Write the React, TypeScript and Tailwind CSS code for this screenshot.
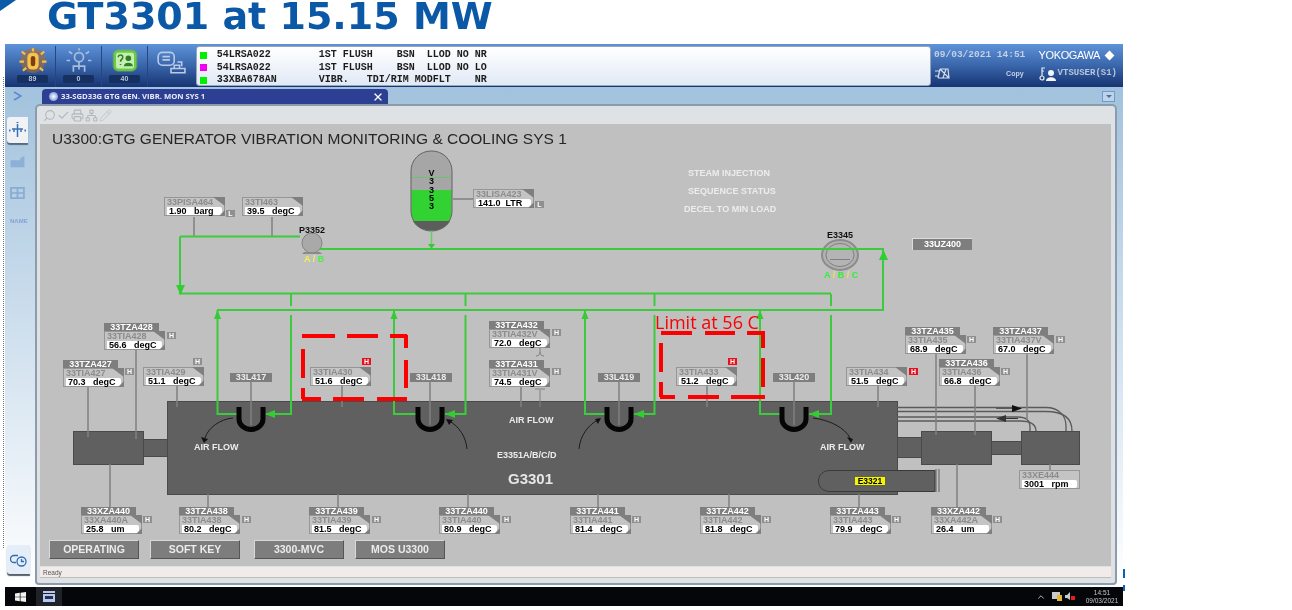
import { Check, Pencil, Printer, Search, Network, X, ChevronUp } from "lucide-react";

const ORIGIN_X = 40;
const ORIGIN_Y = 124;

interface TagData {
  x: number;
  y: number;
  head?: string;
  name: string;
  value: string;
  badge?: { x: number; y: number; text: string; red?: boolean };
  plain?: boolean;
}

const tags: TagData[] = [
  { x: 164, y: 197, name: "33PISA464", value: "1.90   barg", badge: { x: 226, y: 210, text: "L" } },
  { x: 242, y: 197, name: "33TI463", value: "39.5   degC" },
  { x: 473, y: 189, name: "33LISA423", value: "141.0  LTR", badge: { x: 535, y: 201, text: "L" } },
  { x: 104, y: 331, head: "33TZA428", name: "33TIA428", value: "56.6   degC", badge: { x: 167, y: 332, text: "H" } },
  { x: 63, y: 368, head: "33TZA427", name: "33TIA427", value: "70.3   degC", badge: { x: 125, y: 368, text: "H" } },
  { x: 143, y: 367, name: "33TIA429", value: "51.1   degC", badge: { x: 193, y: 358, text: "H" } },
  { x: 310, y: 367, name: "33TIA430", value: "51.6   degC", badge: { x: 362, y: 358, text: "H", red: true } },
  { x: 489, y: 329, head: "33TZA432", name: "33TIA432V", value: "72.0   degC", badge: { x: 552, y: 329, text: "H" } },
  { x: 489, y: 368, head: "33TZA431", name: "33TIA431V", value: "74.5   degC", badge: { x: 552, y: 368, text: "H" } },
  { x: 676, y: 367, name: "33TIA433", value: "51.2   degC", badge: { x: 728, y: 358, text: "H", red: true } },
  { x: 846, y: 367, name: "33TIA434", value: "51.5   degC", badge: { x: 909, y: 368, text: "H", red: true } },
  { x: 905, y: 335, head: "33TZA435", name: "33TIA435", value: "68.9   degC", badge: { x: 967, y: 336, text: "H" } },
  { x: 993, y: 335, head: "33TZA437", name: "33TIA437V", value: "67.0   degC", badge: { x: 1056, y: 336, text: "H" } },
  { x: 939, y: 367, head: "33TZA436", name: "33TIA436", value: "66.8   degC", badge: { x: 1001, y: 368, text: "H" } },
  { x: 1019, y: 470, name: "33XE444", value: "3001   rpm", plain: true },
  { x: 81, y: 515, head: "33XZA440", name: "33XA440A", value: "25.8   um", badge: { x: 143, y: 516, text: "H" } },
  { x: 179, y: 515, head: "33TZA438", name: "33TIA438", value: "80.2   degC", badge: { x: 242, y: 516, text: "H" } },
  { x: 309, y: 515, head: "33TZA439", name: "33TIA439", value: "81.5   degC", badge: { x: 372, y: 516, text: "H" } },
  { x: 439, y: 515, head: "33TZA440", name: "33TIA440", value: "80.9   degC", badge: { x: 502, y: 516, text: "H" } },
  { x: 570, y: 515, head: "33TZA441", name: "33TIA441", value: "81.4   degC", badge: { x: 632, y: 516, text: "H" } },
  { x: 700, y: 515, head: "33TZA442", name: "33TIA442", value: "81.8   degC", badge: { x: 762, y: 516, text: "H" } },
  { x: 830, y: 515, head: "33TZA443", name: "33TIA443", value: "79.9   degC", badge: { x: 892, y: 516, text: "H" } },
  { x: 931, y: 515, head: "33XZA442", name: "33XA442A", value: "26.4   um", badge: { x: 993, y: 516, text: "H" } },
];

const loops = [
  { x: 230, label: "33L417" },
  { x: 410, label: "33L418" },
  { x: 598, label: "33L419" },
  { x: 773, label: "33L420" },
];

const labels = [
  { x: 688, y: 173, text: "STEAM INJECTION" },
  { x: 688, y: 191, text: "SEQUENCE STATUS" },
  { x: 684, y: 209, text: "DECEL TO MIN LOAD" },
  { x: 194, y: 447, text: "AIR FLOW" },
  { x: 509, y: 420, text: "AIR FLOW" },
  { x: 820, y: 447, text: "AIR FLOW" },
  { x: 497, y: 455, text: "E3351A/B/C/D" },
];

const pipes = [
  "M180 236.5H300",
  "M320 249H883V310H217",
  "M180 236.5V293.5H831",
  "M291 294V306M465.5 294V306M654.5 294V306M831 294V306",
  "M291 315V414H266M465.5 315V414H445M654.5 315V414H634M831 315V414H809",
  "M217.5 310V414H238M394 310V414H417M585 310V414H606M760 310V414H781",
];

const leaders = [
  "M194 217V236M272 217V236M453 199H473",
  "M136 349V439M88 386V437M177 386V407M342 386V407",
  "M251 382V425M430 382V425M619 382V425M794 382V425",
  "M521 386V407M707 386V407M878 386V407",
  "M936 354V435M975 386V435M1027 354V420M1050 464V470",
  "M110 464V507M208 494V507M338 494V507M468 494V507M598 494V507M729 494V507M859 494V507M957 464V507",
];

// red markup boxes were hand drawn in the original, so the dashes are uneven
const markup =
  "M302 336H335M347 336H378M390 336H407M406 335V348M406 360V388M302 399H321M333 399H364M377 399H407M303 349V378M303 388V399" +
  "M661 333H692M705 333H735M747 333H765M763 333V348M763 358V387M660 397H675M688 397H719M731 397H765M661 343V372M661 382V397";

function Tag({ tag }: { tag: TagData }) {
  return (
    <>
      {tag.head && (
        <div
          className="absolute w-[55px] h-[9px] bg-[#7e7e7e] text-white text-[9px] font-bold leading-[9px] text-center"
          style={{ left: tag.x - ORIGIN_X, top: tag.y - 8 - ORIGIN_Y }}
        >
          {tag.head}
        </div>
      )}
      <div
        className="absolute w-[61px] h-[19px] border border-[#969696] bg-[#c4c4c4]"
        style={{ left: tag.x - ORIGIN_X, top: tag.y - ORIGIN_Y }}
      >
        <div className="pl-[2px] text-[9px] font-bold leading-[9px] text-[#8c8c8c] whitespace-pre">{tag.name}</div>
        <div className="mx-[2px] h-[8px] bg-white rounded-r-[2px] pl-[2px] text-[9px] font-bold leading-[8px] text-black whitespace-pre">
          {tag.value}
        </div>
        {!tag.plain && (
          <svg className="absolute right-[-1px] top-[-1px]" width="61" height="19" viewBox="0 0 61 19">
            <path d="M49 0H61V9Z M61 13V19H55Z" fill="#7f7f7f" />
          </svg>
        )}
      </div>
      {tag.badge && (
        <div
          className={`absolute w-[9px] h-[7px] text-[7px] font-bold leading-[7px] text-center text-white ${
            tag.badge.red ? "bg-[#e8101c]" : "bg-[#8f8f8f]"
          }`}
          style={{ left: tag.badge.x - ORIGIN_X, top: tag.badge.y - ORIGIN_Y }}
        >
          {tag.badge.text}
        </div>
      )}
    </>
  );
}

function Diagram() {
  return (
    <svg className="absolute inset-0" width="1071" height="442" viewBox="40 124 1071 442">
      {/* Vessel */}
      <rect x="411" y="151" width="41" height="80" rx="20" fill="#a6a6a6" />
      <path d="M411.5 190H451.5V212C451.5 224 442 230.5 431.5 230.5C421 230.5 411.5 224 411.5 212Z" fill="#32d232" />
      <path d="M413 221H450C447 227 440 230.5 431.5 230.5C423 230.5 416 227 413 221Z" fill="#5d5d5d" />
      <rect x="411" y="151" width="41" height="80" rx="20" fill="none" stroke="#636363" />
      <path d="M412 177.500H451" stroke="#5fc85f" strokeWidth="0.8" />
      <path d="M431.500 231V247" stroke="#5fd25f" strokeWidth="1.5" />
      <path d="M428 244H435L431.500 249Z" fill="#37c837" />

      {/* Machine train */}
      <g fill="#606060" stroke="#4a4a4a">
        <rect x="73.500" y="431.500" width="70" height="33" />
        <rect x="143.500" y="439.500" width="24" height="17" />
        <rect x="167.500" y="401.500" width="730" height="93" />
        <rect x="897.500" y="437.500" width="24" height="20" />
        <rect x="921.500" y="431.500" width="70" height="33" />
        <rect x="991.500" y="441.500" width="30" height="13" />
        <rect x="1021.500" y="431.500" width="58" height="33" />
        <path d="M935 470.500H830C823 470.500 818.500 475 818.500 481S823 491.500 830 491.500H935Z" stroke="#3a3a3a" />
      </g>
      <path d="M936 469V492M939 469V492" stroke="#5a5a5a" />

      {/* Bearing return lines */}
      <g fill="none" stroke="#5a5a5a" strokeWidth="1.300">
        <path d="M897 407.500H1046C1058 407.500 1066 415 1066 426V431" />
        <path d="M897 411.500H1046C1062 411.500 1072 417 1072 431" />
        <path d="M897 417H1018C1026 417 1030 421 1030 427V431" />
        <path d="M897 421H1020C1030 421 1036 424 1036 431" />
      </g>
      <path d="M996 408H1012V405L1022 408.500L1012 412V408.500H996Z" fill="#111" />
      <path d="M1018 418H1006V415L996 418.500L1006 422V419H1018Z" fill="#333" />

      {/* Leader lines */}
      <g stroke="#808080" strokeWidth="1.500" fill="none">
        {leaders.map((d) => (
          <path key={d} d={d} />
        ))}
        <path d="M540 347V352M536 356C539 356 540 354 540 352C540 354 541 356 544 356" strokeWidth="1" />
        <path d="M540 390V407M535 389H545" strokeWidth="1" />
      </g>

      {/* Pump and cooler */}
      <circle cx="312" cy="243" r="10" fill="#a9a9a9" stroke="#848484" />
      <path d="M304 252H320L322 254H302Z" fill="#8a8a8a" />
      <ellipse cx="840" cy="255" rx="18" ry="15" fill="#b0b0b0" stroke="#8c8c8c" strokeWidth="2" />
      <ellipse cx="840" cy="255" rx="14" ry="11.500" fill="#b4b4b4" stroke="#808080" />
      <path d="M830 259.500H850" stroke="#808080" />

      {/* Green process pipes */}
      <g stroke="#3ccb3c" strokeWidth="2" fill="none">
        {pipes.map((d) => (
          <path key={d} d={d} />
        ))}
      </g>
      <g fill="#33cc33">
        <path d="M176 285H185L180.500 295Z" />
        <path d="M879 260H888L883.500 250Z" />
        <path d="M214 319H221L217.500 310Z" />
        <path d="M390.500 319H397.500L394 310Z" />
        <path d="M581.500 319H588.500L585 310Z" />
        <path d="M756.500 319H763.500L760 310Z" />
        <path d="M275 410V418L265 414Z" />
        <path d="M455 410V418L445 414Z" />
        <path d="M644 410V418L634 414Z" />
        <path d="M819 410V418L809 414Z" />
      </g>

      {/* Cooling coils */}
      <g fill="none" stroke="#050505" strokeWidth="5">
        <path d="M239 407V419A12 10.500 0 0 0 263 419V407" />
        <path d="M418 407V419A12 10.500 0 0 0 442 419V407" />
        <path d="M607 407V419A12 10.500 0 0 0 631 419V407" />
        <path d="M782 407V419A12 10.500 0 0 0 806 419V407" />
      </g>

      {/* Air flow arrows */}
      <g fill="none" stroke="#1c1c1c">
        <path d="M233 418C220 419 208 428 205 438" />
        <path d="M467 449C466 437 459 426 449 421" />
        <path d="M579 449C580 436 588 425 598 420" />
        <path d="M813 418C830 420 845 428 850 438" />
      </g>
      <g fill="#111">
        <path d="M201 437L208 439L204 443Z" />
        <path d="M446 419L453 420L449 425Z" />
        <path d="M601 418L595 419L598 424Z" />
        <path d="M853 439L847 437L851 443Z" />
      </g>

      {/* Marked-up limit boxes */}
      <path d={markup} fill="none" stroke="#fb0000" strokeWidth="4" />
    </svg>
  );
}

function ProcessCanvas() {
  return (
    <div className="relative h-[442px] bg-[#c0c0c0] overflow-hidden">
      <Diagram />
      <div className="absolute left-[12px] top-[7px] text-[15.500px] leading-4 text-[#262626] whitespace-nowrap">
        U3300:GTG GENERATOR VIBRATION MONITORING &amp; COOLING SYS 1
      </div>

      <div className="absolute left-[387px] top-[45px] w-[9px] text-[9px] font-bold leading-[8.300px] text-center text-black">
        V 3 3 5 3
      </div>

      <div className="absolute left-[259px] top-[102px] text-[9px] font-bold leading-[8px] text-[#111]">P3352</div>
      <div className="absolute left-[264px] top-[131px] text-[9px] font-bold leading-[8px] whitespace-pre">
        <span className="text-[#f2f24a]">A / </span>
        <span className="text-[#4aef4a]">B</span>
      </div>
      <div className="absolute left-[787px] top-[107px] text-[9px] font-bold leading-[8px] text-[#111]">E3345</div>
      <div className="absolute left-[784px] top-[147px] text-[9px] font-bold leading-[8px] text-[#35ee35] whitespace-pre">
        A <span className="text-[#e8e84a]">/</span> B <span className="text-[#e8e84a]">/</span> C
      </div>

      {labels.map((l) => (
        <div
          key={`${l.text}-${l.x}`}
          className="absolute text-[9px] font-bold leading-[8px] text-[#ececec] whitespace-nowrap"
          style={{ left: l.x - ORIGIN_X, top: l.y - 4 - ORIGIN_Y }}
        >
          {l.text}
        </div>
      ))}
      <div className="absolute left-[468px] top-[348px] text-[15px] font-bold leading-[14px] text-[#e6e6e6]">G3301</div>

      {loops.map((l) => (
        <div
          key={l.label}
          className="absolute w-[42px] h-[9px] bg-[#7e7e7e] text-[#ececec] text-[9px] font-bold leading-[9px] text-center"
          style={{ left: l.x - ORIGIN_X, top: 373 - ORIGIN_Y }}
        >
          {l.label}
        </div>
      ))}

      <div className="absolute left-[872px] top-[114px] w-[60px] h-[12px] bg-[#7e7e7e] border-t border-l border-[#dcdcdc] text-white text-[9px] font-bold leading-[11px] text-center">
        33UZ400
      </div>

      <div className="absolute left-[815px] top-[353px] w-[30px] h-[8px] bg-[#f5f500] text-black text-[8.500px] font-bold leading-[8px] text-center">
        E3321
      </div>

      {tags.map((t) => (
        <Tag key={t.name} tag={t} />
      ))}

      <div className="absolute left-[615px] top-[189px] text-[18px] leading-[18px] font-['Open_Sans',sans-serif] text-[#fb0000] whitespace-nowrap">
        Limit at 56 C
      </div>

      <div className="absolute left-[9px] top-[416px] flex">
        {[
          { label: "OPERATING", mr: "mr-[11px]" },
          { label: "SOFT KEY", mr: "mr-[14px]" },
          { label: "3300-MVC", mr: "mr-[11px]" },
          { label: "MOS U3300", mr: "" },
        ].map((b) => (
          <div
            key={b.label}
            className={`w-[90px] ${b.mr} h-[19px] bg-[#7d7d7d] border-t border-l border-[#d8d8d8] border-r border-b border-r-[#555] border-b-[#555] text-[#ececec] text-[10.500px] font-bold leading-[17px] text-center`}
          >
            {b.label}
          </div>
        ))}
      </div>
    </div>
  );
}

function AlarmCount({ value, children }: { value: string; children: React.ReactNode }) {
  return (
    <div className="w-[46px] flex flex-col items-center border-r border-[#27467f]">
      <div className="h-[29px] flex items-center justify-center">{children}</div>
      <div className="w-[31px] h-[8px] rounded-[2px] bg-[#16305f] text-[#b9c8dd] text-[7px] font-bold leading-[8px] text-center">
        {value}
      </div>
    </div>
  );
}

function Toolbar() {
  const messages = [
    { color: "bg-[#00f000]", text: "54LRSA022        1ST FLUSH    BSN  LLOD NO NR" },
    { color: "bg-[#f000f0]", text: "54LRSA022        1ST FLUSH    BSN  LLOD NO LO" },
    { color: "bg-[#00f000]", text: "33XBA678AN       VIBR.   TDI/RIM MODFLT    NR" },
  ];
  return (
    <div className="h-[43px] flex bg-linear-to-b from-[#5e93da] via-[#3a66ab] to-[#173473]">
      <div className="w-[191px] flex pt-[2px] pl-[5px]">
        <AlarmCount value="89">
          <svg width="32" height="27" viewBox="0 0 28 24">
            <circle cx="14" cy="12" r="11" fill="#b86a20" opacity="0.55" />
            <g stroke="#f4c040" strokeWidth="2">
              <path d="M14 1V4M4 4L7 6.500M24 4L21 6.500M2 13H6M22 13H26M5 21L8 18.500M23 21L20 18.500" />
            </g>
            <rect x="9" y="5" width="10" height="15" rx="4" fill="#f7c44a" />
            <rect x="12" y="8" width="4" height="9" rx="2" fill="#7c3f12" />
          </svg>
        </AlarmCount>
        <AlarmCount value="0">
          <svg width="32" height="27" viewBox="0 0 28 24" fill="none" stroke="#a8bddb" strokeWidth="1.500">
            <circle cx="14" cy="9" r="4" />
            <path d="M14 13V20M9 22V17H19V22M14 1V3M5 4L8 6M23 4L20 6M3 12H6M22 12H25" />
          </svg>
        </AlarmCount>
        <AlarmCount value="40">
          <svg width="32" height="27" viewBox="0 0 28 24">
            <rect x="3" y="2" width="22" height="20" rx="5" fill="#6fc54a" opacity="0.5" />
            <rect x="5" y="4" width="18" height="16" rx="3" fill="#c4efb0" stroke="#6dcb3f" strokeWidth="2" />
            <path d="M8 9C8 6.500 12 6.500 12 9C12 11 10 11 10 13M10 15V16" stroke="#2e7f28" strokeWidth="1.300" fill="none" />
            <circle cx="17" cy="10" r="2.500" fill="#2e7f28" />
            <path d="M13 17C13 13 21 13 21 17Z" fill="#2e7f28" />
          </svg>
        </AlarmCount>
        <div className="w-[46px] h-[31px] flex items-center justify-center">
          <svg width="30" height="26" viewBox="0 0 28 24" fill="none" stroke="#b9cbe4" strokeWidth="1.500">
            <rect x="2" y="3" width="15" height="12" rx="4" />
            <path d="M6 7H13M6 10H13M20 12H24V16M14 18H27V22H14ZM17 18V15H22V18" />
          </svg>
        </div>
      </div>

      <div className="w-[736px] h-[40px] mt-[2px] rounded-[3px] border border-[#9aa6bb] bg-linear-to-b from-white to-[#e1e9f6] pt-[2px] pl-[3px]">
        {messages.map((m, i) => (
          <div key={i} className="h-[12.500px] flex items-center">
            <span className={`w-[7px] h-[7px] ${m.color}`} />
            <span className="ml-[10px] font-['Liberation_Mono',monospace] text-[10px] font-bold leading-[12px] text-[#1c1c1c] whitespace-pre">
              {m.text}
            </span>
          </div>
        ))}
      </div>

      <div className="flex-1 pl-[3px] pr-[6px] flex flex-col">
        <div className="h-[20px] flex items-center justify-between pt-[2px] pr-[4px]">
          <span className="font-['Liberation_Mono',monospace] text-[9.500px] font-bold text-[#c3d0e2] whitespace-pre">09/03/2021 14:51</span>
          <span className="flex items-center gap-[6px] text-white text-[11px] tracking-[-0.4px]">
            YOKOGAWA
            <span className="w-[7px] h-[7px] bg-white rotate-45" />
          </span>
        </div>
        <div className="h-[20px] flex items-center">
          <svg width="18" height="12" viewBox="0 0 18 12" fill="none" stroke="#d5deea" strokeWidth="1.200">
            <path d="M1 3H6M1 8H4M6 1L4 10M6 1L15 10M6 1H14L15 10H4M12 1L9 10" />
          </svg>
          <span className="ml-[54px] text-[7px] font-bold text-[#c3d0e2]">Copy</span>
          <svg className="ml-[15px]" width="17" height="14" viewBox="0 0 17 14">
            <circle cx="3" cy="11" r="2" fill="none" stroke="#e8eef6" strokeWidth="1.200" />
            <path d="M3 9V1H6M3 4H5" fill="none" stroke="#e8eef6" strokeWidth="1.200" />
            <circle cx="12" cy="6" r="3" fill="#f2f5f9" />
            <path d="M7 14C7 9 17 9 17 14Z" fill="#f2f5f9" />
          </svg>
          <span className="ml-[2px] font-['Liberation_Mono',monospace] text-[9px] font-bold text-[#b5c4d9] whitespace-pre">VTSUSER(S1)</span>
        </div>
      </div>
    </div>
  );
}

function SideRail() {
  return (
    <div className="w-[30px] flex flex-col items-start">
      <svg className="ml-[8px] mt-[4px]" width="9" height="10" viewBox="0 0 9 10" fill="none" stroke="#5a8bd2" strokeWidth="1.600">
        <path d="M1 1L8 5L1 9" />
      </svg>
      <div className="ml-[2px] mt-[16px] w-[21px] h-[26px] bg-[#f0f2f5] rounded-l-[3px] shadow-[0_2px_1px_#5a6a7d] flex items-center justify-center">
        <svg width="17" height="17" viewBox="0 0 17 17" fill="none" stroke="#3a71b4" strokeWidth="1.500">
          <path d="M8.500 2V15M3 7H14M5 10V7M12 10V7" />
          <path d="M0 8.500H1.500M15.500 8.500H17M8.500 0V1" strokeWidth="2" />
        </svg>
      </div>
      <svg className="ml-[5px] mt-[12px]" width="15" height="13" viewBox="0 0 16 15" fill="#8cb0d6">
        <path d="M0 6H11V4L16 1V6V14H0Z" />
      </svg>
      <svg className="ml-[5px] mt-[19px]" width="15" height="12" viewBox="0 0 17 14" fill="none" stroke="#88abd3" strokeWidth="2">
        <rect x="1" y="1" width="15" height="12" />
        <path d="M1 7H16M8.500 1V13" />
      </svg>
      <span className="ml-[5px] mt-[18px] text-[6px] font-bold text-[#7fa4cf]">NAME</span>
      <div className="flex-1" />
      <div className="ml-[2px] mb-[13px] w-[23px] h-[29px] bg-[#e4edf8] rounded-l-[3px] shadow-[0_2px_1px_#55606c] flex items-center justify-center">
        <svg width="18" height="14" viewBox="0 0 18 14" fill="none" stroke="#2f6db3" strokeWidth="1.300">
          <path d="M8 2.500H4A3.500 3.500 0 0 0 4 9.500H6" />
          <circle cx="11.500" cy="8.500" r="4.500" />
          <path d="M11.500 6V8.500H14" />
        </svg>
      </div>
    </div>
  );
}

function Panel() {
  return (
    <div className="w-[1082px] h-[481px] rounded-t-[5px] rounded-b-[4px] border-2 border-[#8c9cad] bg-[#dfe2e5] pl-[3px] pr-[4px]">
      <div className="h-[18px] flex items-center gap-px pl-[3px] text-[#b3b7bb]">
        <Search size={13} className="-scale-x-100" />
        <Check size={13} />
        <Printer size={13} />
        <Network size={13} />
        <Pencil size={13} className="text-[#c9cdd0]" />
      </div>
      <ProcessCanvas />
      <div className="mt-px h-[11px] bg-[#f1ecea] border-b border-[#bdbdbd] pl-[3px] text-[6.500px] leading-[11px] text-[#555]">Ready</div>
    </div>
  );
}

function Taskbar() {
  return (
    <div className="ml-[5px] w-[1118px] h-[19px] bg-[#05060a] flex items-center text-[#d6d6d6]">
      <svg className="ml-[10px]" width="11" height="10" viewBox="0 0 11 10" fill="#f2f2f2">
        <path d="M0 1.500L4.800 0.800V4.700H0ZM5.500 0.700L11 0V4.700H5.500ZM0 5.300H4.800V9.200L0 8.500ZM5.500 5.300H11V10L5.500 9.300Z" />
      </svg>
      <div className="ml-[10px] w-[26px] h-[19px] bg-[#1f2229] flex items-center justify-center">
        <svg width="12" height="11" viewBox="0 0 12 11" fill="#b9c7ee">
          <path d="M0 0H12V2H0ZM0 3H12V11H0Z" />
          <path d="M2 5H10V8H2Z" fill="#23305a" />
        </svg>
      </div>
      <div className="flex-1" />
      <ChevronUp size={10} className="mr-[6px]" />
      <svg width="10" height="9" viewBox="0 0 10 9" className="mr-[3px]">
        <rect x="0" y="0" width="8" height="7" fill="#c9c9c9" />
        <rect x="5" y="3" width="5" height="6" fill="#e3b53a" />
      </svg>
      <svg width="10" height="9" viewBox="0 0 10 9" className="mr-[8px]">
        <path d="M0 3H2L5 0V8L2 6H0Z" fill="#c9c9c9" />
        <rect x="6" y="4" width="4" height="4" fill="#e81c1c" />
      </svg>
      <div className="w-[38px] mr-[2px] text-center text-[6.500px] leading-[8px] text-[#c6c6c6]">
        <div>14:51</div>
        <div>09/03/2021</div>
      </div>
    </div>
  );
}

export default function App() {
  return (
    <div className="relative w-[1292px] h-[610px] bg-white overflow-hidden font-['Liberation_Sans',Arial,sans-serif] blur-[0.5px]">
      <div className="absolute left-0 top-0 w-0 h-0 border-t-[11px] border-r-[16px] border-t-[#0a5aa8] border-r-transparent" />
      <h1 className="h-[44px] pl-[47px] font-['DejaVu_Sans',sans-serif] font-bold text-[38px] leading-[33px] text-[#0a58a6] whitespace-nowrap">
        GT3301 at 15.15 MW
      </h1>

      <div className="absolute left-[3px] top-[77px] h-[471px] border-l border-dotted border-[#777]" />
      <div className="absolute left-[1123px] top-[569px] w-[2px] h-[9px] bg-[#1160b0]" />
      <div className="absolute left-[1123px] top-[585px] w-[2px] h-[6px] bg-[#1160b0]" />

      <div className="ml-[5px] w-[1118px]">
        <Toolbar />
        <div className="h-[500px] flex bg-linear-to-b from-[#a2c2dd] to-white">
          <SideRail />
          <div className="flex flex-col">
            <div className="h-[17px] flex justify-between pr-[2px]">
              <div className="ml-[7px] mt-[2px] w-[346px] h-[15px] rounded-t-[4px] bg-[#2c3f93] flex items-center pl-[7px] pr-[4px]">
                <span className="w-[9px] h-[9px] rounded-full bg-radial from-white to-[#5f78c8]" />
                <span className="ml-[3px] flex-1 text-[7.700px] font-bold text-[#e8ebf5] font-['Open_Sans',sans-serif] whitespace-nowrap">
                  33-SGD33G GTG GEN. VIBR. MON SYS 1
                </span>
                <X size={12} className="text-white" strokeWidth={2.500} />
              </div>
              <div className="mt-[4px] w-[13px] h-[11px] border border-[#6f9bd1] bg-[#bcd3ea] flex items-center justify-center">
                <span className="w-0 h-0 border-x-[3px] border-t-[3px] border-x-transparent border-t-[#4f6f98]" />
              </div>
            </div>
            <Panel />
          </div>
        </div>
      </div>
      <Taskbar />
    </div>
  );
}
